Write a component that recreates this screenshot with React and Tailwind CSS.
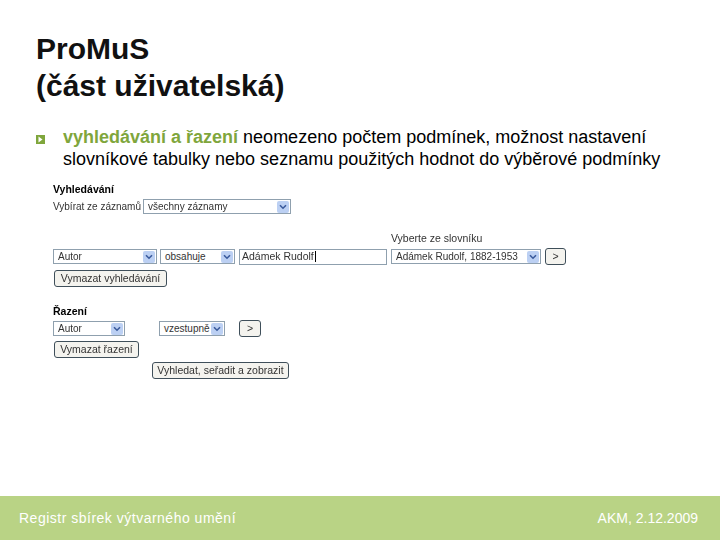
const Select = ({ value, className }) => (
  <div className={`flex h-[15px] items-center justify-between border border-[#8fa0ae] bg-white pl-1 pr-[1px] text-[10px] ${className}`}>
    <span className="whitespace-nowrap">{value}</span>
    <span className="flex h-[12px] w-[12px] shrink-0 items-center justify-center rounded-[2px] bg-[#bcd0f3]">
      <svg width="8" height="6" viewBox="0 0 8 6" fill="none">
        <path d="M1 1.2 4 4.2 7 1.2" stroke="#3a5a9c" strokeWidth="1.6" />
      </svg>
    </span>
  </div>
)

const Button = ({ children, className }) => (
  <div className={`flex h-[17px] items-center justify-center rounded-[3px] border border-[#3f4f5a] bg-[#f4f3ee] ${className}`}>
    {children}
  </div>
)

export default function App() {
  return (
    <div className="flex h-[540px] w-[720px] flex-col overflow-hidden bg-white font-['Liberation_Sans',sans-serif] text-black">
      <div className="flex-1">
        <h1 className="pl-[36px] pt-[30px] text-[30px] font-bold leading-[37px] text-[#111]">
          ProMuS
          <br />
          (část uživatelská)
        </h1>

        <div className="mt-[22px] flex pl-[36px] pr-[40px] text-[18px] leading-[22px]">
          <span className="mr-[18px] mt-[9px] flex h-[9px] w-[9px] shrink-0 items-center justify-center bg-[#7fa63c]">
            <svg width="5" height="7" viewBox="0 0 5 7">
              <path d="M0.5 0.5 4.5 3.5 0.5 6.5Z" fill="#fff" />
            </svg>
          </span>
          <p>
            <span className="font-bold text-[#7fa63c]">vyhledávání a řazení</span> neomezeno počtem podmínek, možnost
            nastavení slovníkové tabulky nebo seznamu použitých hodnot do výběrové podmínky
          </p>
        </div>

        <div className="mt-[13px] pl-[53px] text-[10.5px] leading-[13px] text-[#333] blur-[0.3px]">
          <div className="font-bold text-black">Vyhledávání</div>
          <div className="mt-[3px] flex items-center">
            <span className="w-[90px] whitespace-nowrap text-[10px]">Vybírat ze záznamů</span>
            <Select value="všechny záznamy" className="w-[148px]" />
          </div>

          <div className="ml-[338px] mt-[18px] h-[13px]">Vyberte ze slovníku</div>
          <div className="mt-[3px] flex items-center">
            <Select value="Autor" className="w-[104px]" />
            <Select value="obsahuje" className="ml-[3px] w-[75px]" />
            <div className="ml-[4px] flex h-[16px] w-[148px] items-center border border-[#8fa0ae] pl-[2px]">
              Adámek Rudolf<span className="ml-[1px] h-[11px] w-px bg-black" />
            </div>
            <Select value="Adámek Rudolf, 1882-1953" className="ml-[4px] w-[150px]" />
            <Button className="ml-[4px] w-[21px]">&gt;</Button>
          </div>
          <Button className="ml-[1px] mt-[5px] w-[113px]">Vymazat vyhledávání</Button>

          <div className="mt-[18px] font-bold text-black">Řazení</div>
          <div className="mt-[2px] flex items-center">
            <Select value="Autor" className="w-[72px]" />
            <Select value="vzestupně" className="ml-[34px] w-[66px]" />
            <Button className="ml-[14px] h-[16px] w-[22px]">&gt;</Button>
          </div>
          <Button className="ml-[1px] mt-[4px] w-[85px]">Vymazat řazení</Button>
          <Button className="ml-[99px] mt-[4px] w-[137px]">Vyhledat, seřadit a zobrazit</Button>
        </div>
      </div>

      <footer className="flex h-[44px] items-center justify-between bg-[#b9d385] pl-[19px] pr-[22px] text-[14px] text-white">
        <span className="tracking-[0.5px]">Registr sbírek výtvarného umění</span>
        <span>AKM, 2.12.2009</span>
      </footer>
    </div>
  )
}
